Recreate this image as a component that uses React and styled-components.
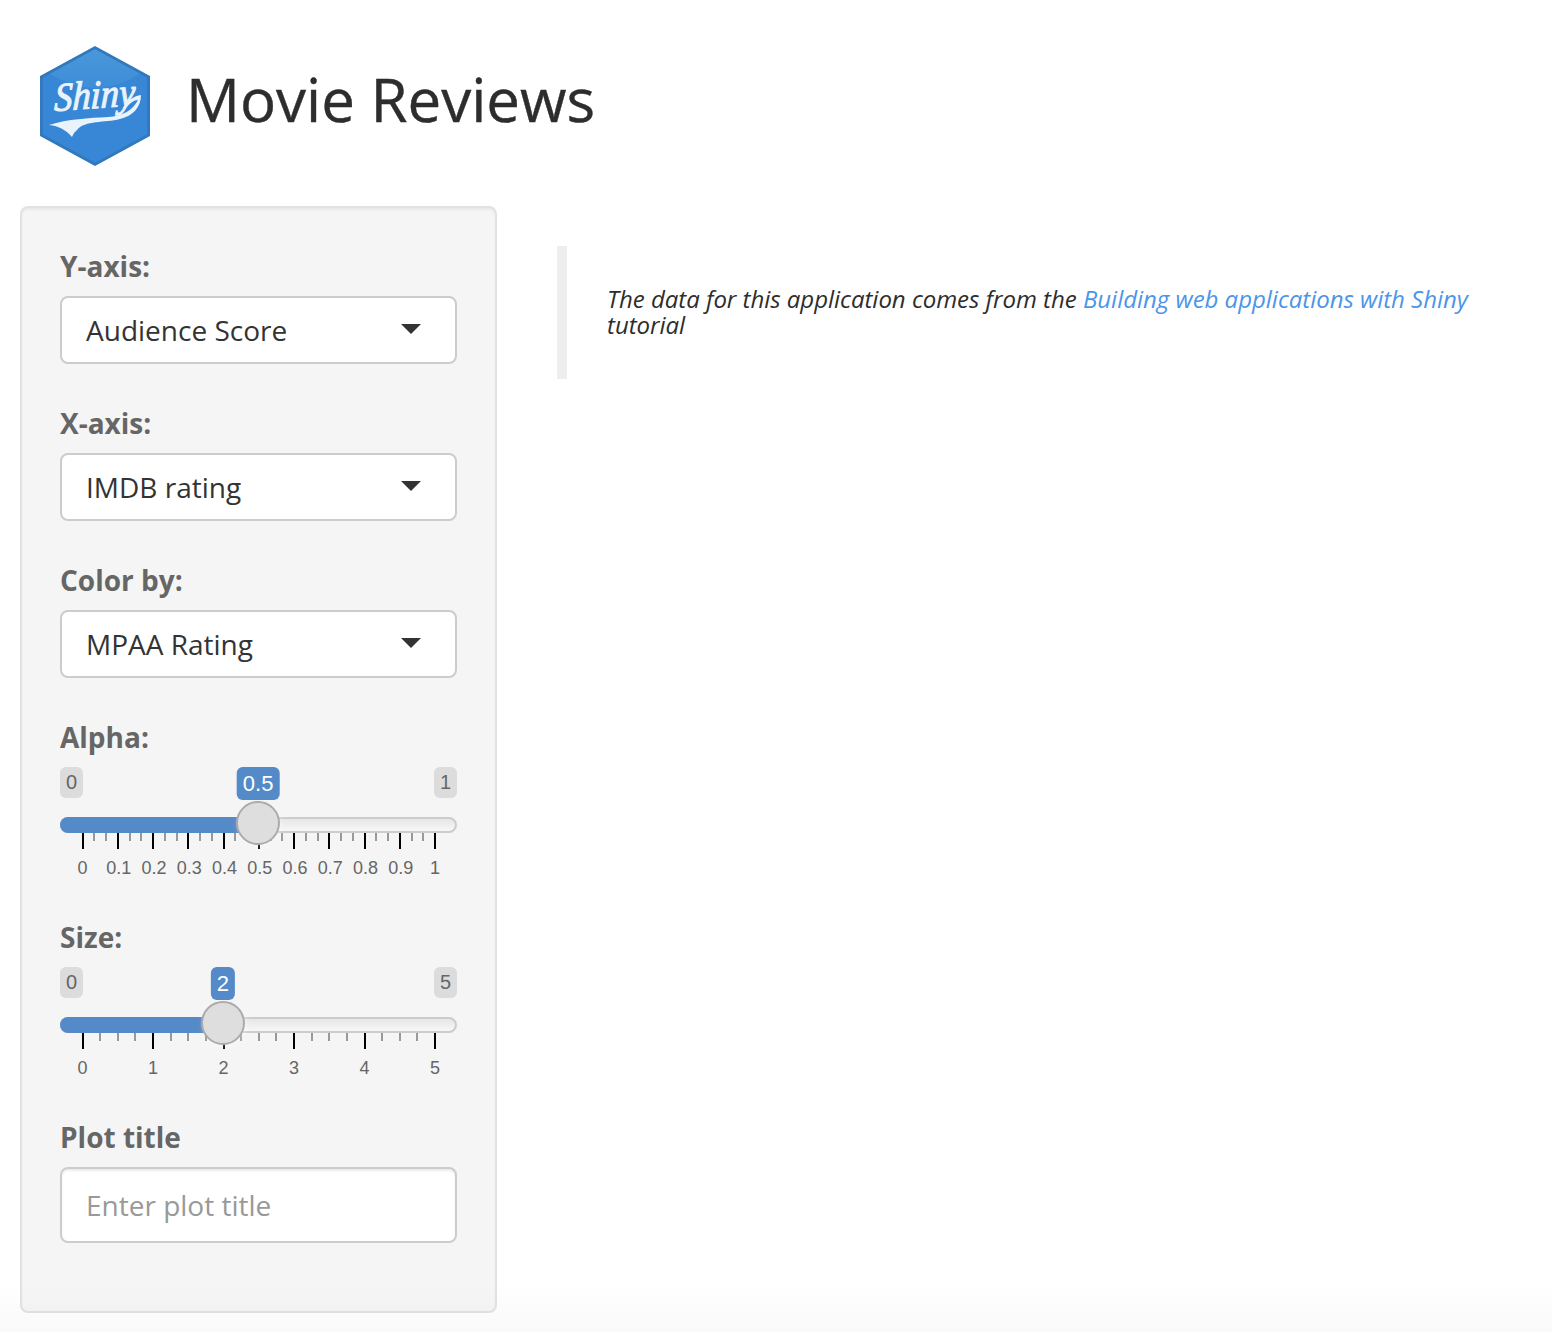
import React from "react";
import styled, { createGlobalStyle } from "styled-components";

const GlobalStyle = createGlobalStyle`
  *, *::before, *::after { box-sizing: border-box; }
  html, body { margin: 0; padding: 0; background: #fff; }
  body {
    font-family: "Open Sans", "Noto Sans", sans-serif;
    font-size: 28px;
    line-height: 40px;
    color: #2d2d2d;
    overflow: hidden;
  }
`;

const Page = styled.div`
  position: relative;
  height: 1332px;
  padding: 0 20px;
  overflow: hidden;
`;

const BottomFade = styled.div`
  position: absolute;
  left: 0;
  right: 0;
  bottom: 0;
  height: 48px;
  background: linear-gradient(rgba(0, 0, 0, 0), rgba(0, 0, 0, 0.022));
  pointer-events: none;
`;

const Header = styled.header`
  display: flex;
  align-items: flex-start;
  gap: 36px;
  height: 206px;
  padding: 46px 20px 0;
`;

const Logo = styled.svg`
  display: block;
  flex: none;
  width: 110px;
  height: 120px;
`;

const Title = styled.h1`
  margin: 20px 0 0;
  font-size: 60px;
  line-height: 66px;
  font-weight: 400;
  white-space: nowrap;
  -webkit-text-stroke: 0.4px currentColor;
`;

const Columns = styled.div`
  display: flex;
  align-items: flex-start;
  gap: 60px;
`;

const Sidebar = styled.form`
  flex: none;
  width: 477px;
  height: 1107px;
  padding: 38px;
  border: 2px solid #e2e2e2;
  border-radius: 8px;
  background: #f5f5f5;
  box-shadow: inset 0 2px 2px rgba(0, 0, 0, 0.05);
`;

const Group = styled.div`
  height: ${(p) => p.$height}px;
`;

const Label = styled.label`
  display: block;
  height: 40px;
  margin-bottom: 10px;
  font-weight: 700;
  color: #666;
`;

const SelectBox = styled.div`
  display: flex;
  align-items: center;
  justify-content: space-between;
  height: 68px;
  padding: 0 34px 0 24px;
  border: 2px solid #ccc;
  border-radius: 8px;
  background: #fff;
  color: #333;
`;

const Caret = styled.span`
  width: 0;
  height: 0;
  margin-top: -2px;
  border: 10px solid transparent;
  border-top-color: #333;
  border-bottom-width: 0;
`;

const TextInput = styled.input`
  display: block;
  width: 100%;
  height: 76px;
  padding: 0 24px;
  border: 2px solid #ccc;
  border-radius: 8px;
  outline: none;
  background: #fff;
  box-shadow: inset 0 2px 2px rgba(0, 0, 0, 0.075);
  font: inherit;
  color: #333;
  &::placeholder { color: #999; opacity: 1; }
`;

const SliderRoot = styled.div`
  position: relative;
  font-family: "Liberation Sans", Arial, sans-serif;
  color: #666;
`;

const Limits = styled.div`
  display: flex;
  justify-content: space-between;
  height: 50px;
`;

const Limit = styled.span`
  height: 31px;
  padding: 0 6px;
  border-radius: 6px;
  background: #dcdcdc;
  font-size: 20px;
  line-height: 31px;
`;

const Track = styled.div`
  height: 16px;
  border: 2px solid #ccc;
  border-radius: 16px;
  background: linear-gradient(#dedede -50%, #fff 150%);
`;

const Filled = styled.div`
  position: absolute;
  top: 50px;
  left: 0;
  height: 16px;
  border-radius: 16px 0 0 16px;
  background: #548ac7;
`;

const Handle = styled.div`
  position: absolute;
  top: 34px;
  width: 44px;
  height: 44px;
  margin-left: -22px;
  border: 2px solid #ababab;
  border-radius: 50%;
  background: #dedede;
  box-shadow: 2px 2px 6px rgba(255, 255, 255, 0.3);
`;

const Value = styled.div`
  position: absolute;
  top: 0;
  height: 33px;
  padding: 0 6px;
  border-radius: 6px;
  background: #548ac7;
  color: #fff;
  font-size: 22px;
  line-height: 33px;
  transform: translateX(-50%);
`;

const Scale = styled.div`
  position: relative;
  height: 50px;
`;

const Tick = styled.span`
  position: absolute;
  top: 0;
  width: 2px;
  height: ${(p) => (p.$major ? 16 : 8)}px;
  background: ${(p) => (p.$major ? "#000" : "#999")};
`;

const TickLabel = styled.span`
  position: absolute;
  top: 25px;
  font-size: 18px;
  line-height: 20px;
  transform: translateX(-50%);
`;

const Quote = styled.blockquote`
  flex: 1;
  height: 133px;
  margin: 40px 20px 0 0;
  padding: 40px 0 0 40px;
  border-left: 10px solid #eee;
  font-size: 24px;
  line-height: 26.4px;
  letter-spacing: -0.025px;
  font-style: italic;
`;

const Link = styled.a`
  color: #4b95ea;
  text-decoration: none;
`;

const SCALE_START = 22;
const SCALE_WIDTH = 352.5;

function Slider({ min, max, value, labels, minorPerMajor }) {
  const steps = (labels.length - 1) * minorPerMajor;
  const center = SCALE_START + ((value - min) / (max - min)) * SCALE_WIDTH;
  const ticks = Array.from({ length: steps + 1 }, (_, i) => i);
  return (
    <SliderRoot>
      <Limits>
        <Limit>{min}</Limit>
        <Limit>{max}</Limit>
      </Limits>
      <Track />
      <Filled style={{ width: center }} />
      <Scale>
        {ticks.map((i) => (
          <Tick
            key={i}
            $major={i % minorPerMajor === 0}
            style={{ left: Math.floor(SCALE_START + (i * SCALE_WIDTH) / steps) }}
          />
        ))}
        {labels.map((label, i) => (
          <TickLabel
            key={label}
            style={{
              left:
                SCALE_START +
                (label.includes(".") ? 1.5 : 0.5) +
                (i * SCALE_WIDTH) / (labels.length - 1),
            }}
          >
            {label}
          </TickLabel>
        ))}
      </Scale>
      <Handle style={{ left: Math.round(center) }} />
      <Value style={{ left: center - 0.1 }}>{value}</Value>
    </SliderRoot>
  );
}

function SelectGroup({ label, value }) {
  return (
    <Group $height={157}>
      <Label>{label}</Label>
      <SelectBox>
        {value}
        <Caret />
      </SelectBox>
    </Group>
  );
}

function ShinyLogo() {
  return (
    <Logo viewBox="0 0 110 120" role="img" aria-label="Shiny">
      <defs>
        <linearGradient id="sheen" x1="0" y1="0" x2="0" y2="1">
          <stop offset="0" stopColor="#4a98da" />
          <stop offset="1" stopColor="#3d8dd8" />
        </linearGradient>
      </defs>
      <path d="M55 0 110 30V90L55 120 0 90V30Z" fill="#3179bd" />
      <path d="M55 3.2 107.2 31.7V88.3L55 116.8 2.8 88.3V31.7Z" fill="#3887d6" />
      <path d="M55 3.2 100 27.8Q78 42 55 42T10 27.8Z" fill="url(#sheen)" />
      <text
        transform="translate(14 65) rotate(-4) skewX(-6)"
        fontFamily="Liberation Serif, serif"
        fontStyle="italic"
        fontWeight="400"
        fontSize="40"
        fill="#e8f3fb"
        stroke="#e8f3fb"
        strokeWidth="1.1"
        textLength="81"
        lengthAdjust="spacingAndGlyphs"
      >
        Shiny
      </text>
      <path
        d="M9 79C28 73 49 72 68 71C83 70 93 64 98 54C94 54 90 57 85 63L83 62C88 54 94 50 101 49C101 61 93 70 80 73C65 77 45 74 37 84Q33 87 32 91C26 84 19 80 9 79Z"
        fill="#e8f3fb"
      />
    </Logo>
  );
}

const ALPHA_LABELS = ["0", "0.1", "0.2", "0.3", "0.4", "0.5", "0.6", "0.7", "0.8", "0.9", "1"];
const SIZE_LABELS = ["0", "1", "2", "3", "4", "5"];

export default function App() {
  return (
    <>
      <GlobalStyle />
      <Page>
        <Header>
          <ShinyLogo />
          <Title>Movie Reviews</Title>
        </Header>
        <Columns>
          <Sidebar>
            <SelectGroup label="Y-axis:" value="Audience Score" />
            <SelectGroup label="X-axis:" value="IMDB rating" />
            <SelectGroup label="Color by:" value="MPAA Rating" />
            <Group $height={200}>
              <Label>Alpha:</Label>
              <Slider min={0} max={1} value={0.5} labels={ALPHA_LABELS} minorPerMajor={3} />
            </Group>
            <Group $height={200}>
              <Label>Size:</Label>
              <Slider min={0} max={5} value={2} labels={SIZE_LABELS} minorPerMajor={4} />
            </Group>
            <Group $height={126}>
              <Label htmlFor="plot-title">Plot title</Label>
              <TextInput id="plot-title" type="text" placeholder="Enter plot title" />
            </Group>
          </Sidebar>
          <Quote>
            The data for this application comes from the{" "}
            <Link>Building web applications with Shiny</Link> tutorial
          </Quote>
        </Columns>
        <BottomFade />
      </Page>
    </>
  );
}
